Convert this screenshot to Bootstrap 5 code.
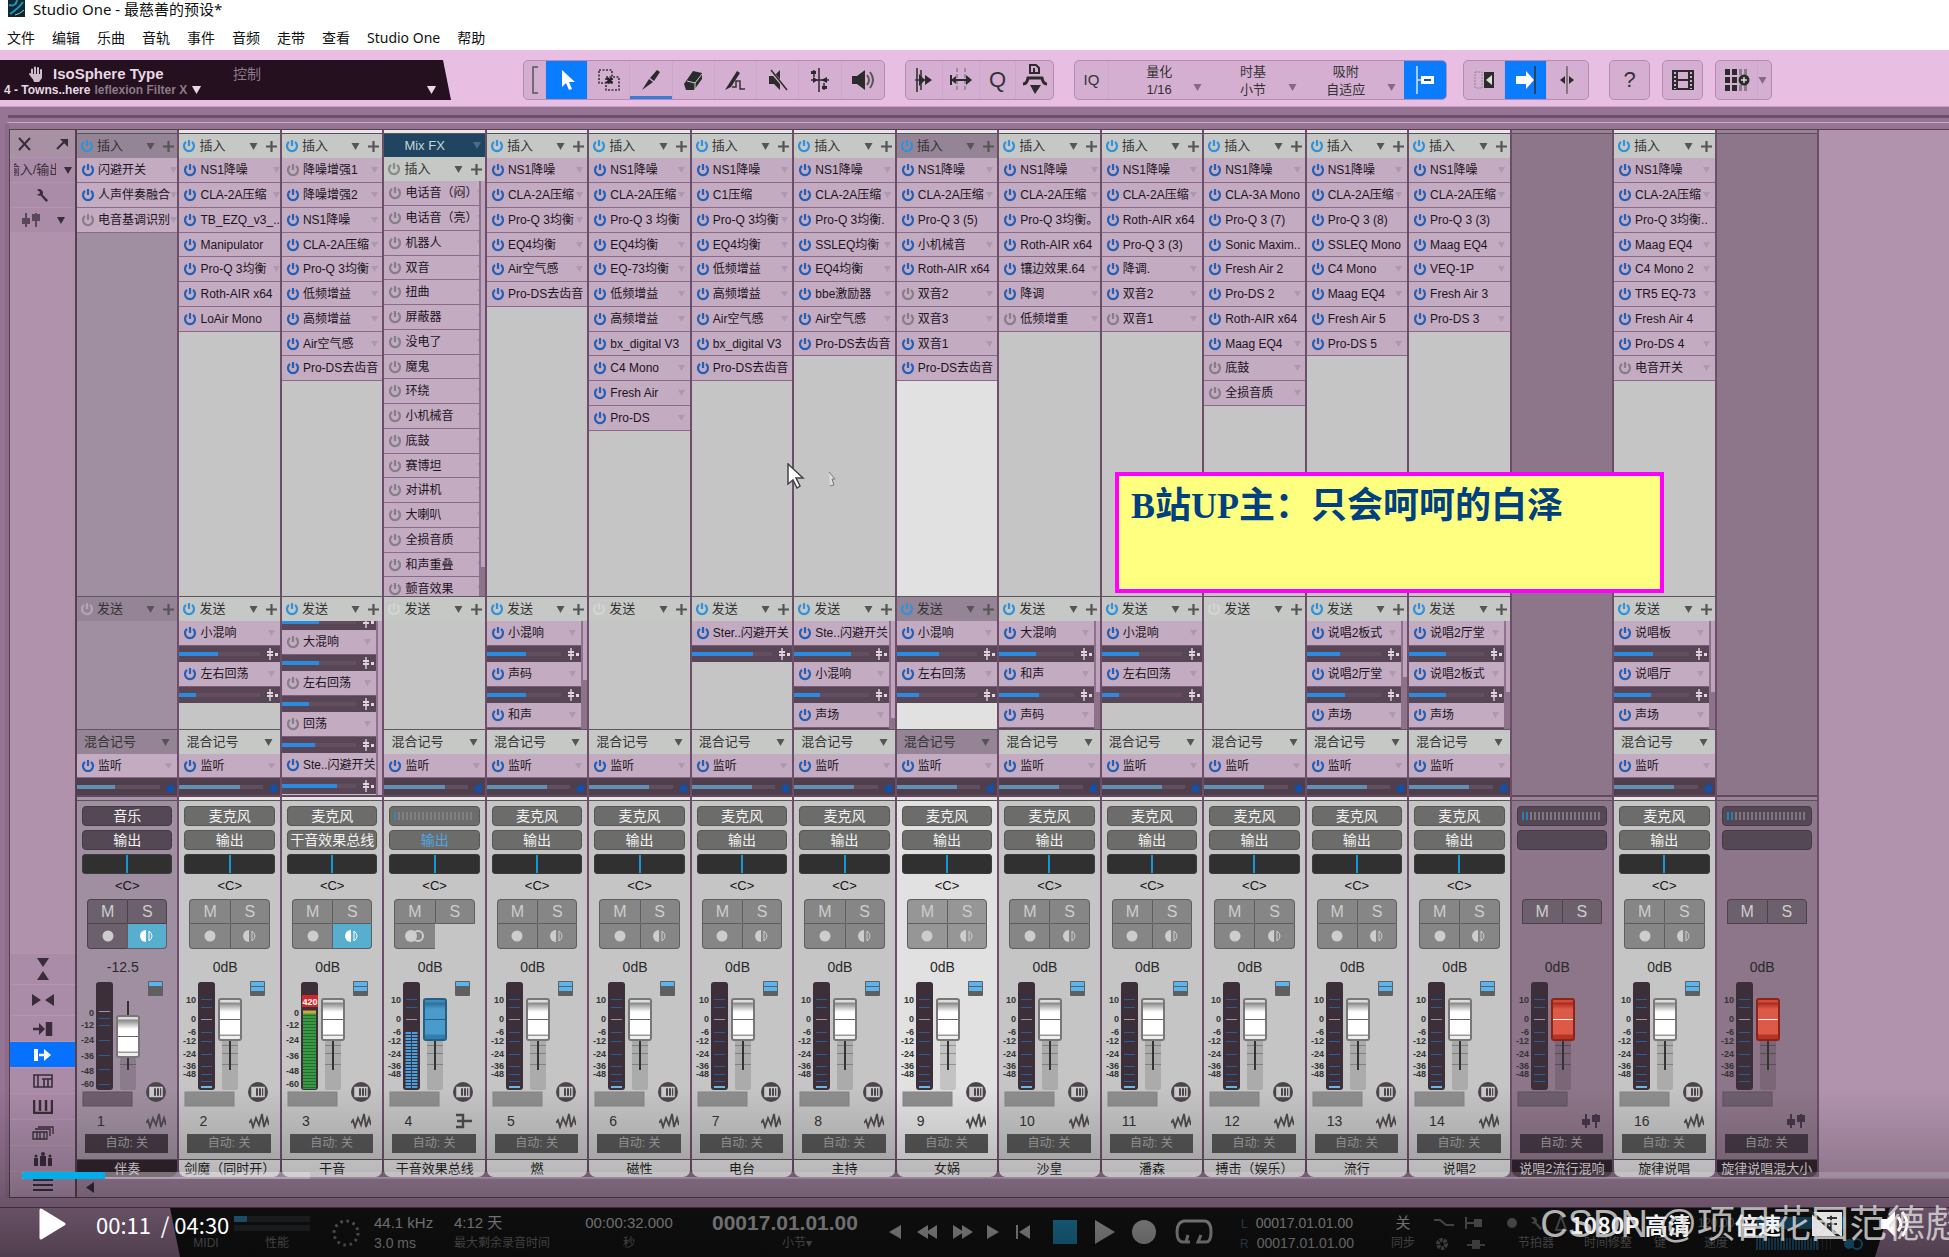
<!DOCTYPE html>
<html lang="zh-CN">
<head>
<meta charset="utf-8">
<meta name="viewport" content="width=device-width, initial-scale=1">
<title>Studio One - 最慈善的预设*</title>
<link rel="stylesheet" href="https://cdn.jsdelivr.net/npm/bootstrap@5.3.0/dist/css/bootstrap.min.css">
<style>
:root{--line:#6c4e6b;--dark:#54404f;--slot:#c3abc2;--face:#c5c5c5;--cjk:"Noto Sans CJK SC"}
body{font-family:"Liberation Sans",var(--cjk),sans-serif;font-size:12px;line-height:16px;color:#161216;background:#967494;height:100vh;overflow:hidden}
button,select,input{font-family:inherit;color:inherit;border:0;padding:0;margin:0;background:none}
a{color:inherit;text-decoration:none}
svg{display:block;flex:none}
/* window head */
.winbar{background:#fff;color:#111;height:20px;font:15px/18px "Noto Sans",var(--cjk),sans-serif;padding-left:8px;gap:8px}
.winmenu{background:#fff;color:#111;height:30px;font:14px/22px "Noto Sans",var(--cjk),sans-serif;padding:7px 0 0 7px;gap:17px}
.toolbar{background:#e8bfe3;height:57px;padding-top:10px;border-bottom:1px solid #c79fc4}
.plug{width:451px;height:40px;background:#24101f;clip-path:polygon(0 0,443px 0,451px 100%,0 100%);color:#e8d8e6;margin-right:72px;padding:5px 14px 0 4px}
.plug .nm{font:bold 15px/17px "Liberation Sans",sans-serif;width:180px;margin-left:9px}
.plug .dim{color:#8d7a8a}
.plug .ctl{font-size:14px;color:#8d7a8a}
.tgroup{height:40px;background:#d5afd1;border:1px solid #b48bb1;border-radius:5px;overflow:hidden;color:#333;flex:none}
.tgroup button{width:42px;display:flex;align-items:center;justify-content:center;border-right:1px solid #cfa6cc}
.tgroup button:last-child{border-right:0}
.tgroup .on{background:#0a7cff;color:#fff}
.tgroup .drawn{box-shadow:inset 0 -4px 0 -1px #3b7ad6}
.tools{width:362px}.tools button:first-child{width:22px}
.edits{width:149px}.quant{width:373px}.scrolls{width:126px}.single{width:41px}.layouts{width:57px}
.glyph{font-size:22px}.quant .iq{width:34px;font-size:15px}
.qfield{text-align:center;font-size:13px;line-height:18px;color:#333}
.qfield label{display:block}
.qfield select{appearance:none;width:100%;text-align:center;text-align-last:center;height:18px;line-height:18px}
.groove{height:3px;background:#69506a;margin:8px 0 -11px 8px;flex:none;position:relative}
/* mixer */
.mixer{margin:15px 0 9px 5px;border-left:4px solid #8d6c8b;border-top:1px solid #d2a6d0;padding-top:6px;min-height:0}
.rail{width:68px;background:#b092ad;border:1px solid var(--dark);border-right:2px solid var(--dark);color:#382d38;flex:none}
.rail .rtop{height:27px;background:#a791a3;padding:0 6px}
.rail .ritem{height:25px;background:#aa8ba8;border-top:1px solid #b393b0;display:flex;align-items:center;justify-content:center;width:100%}
.rail .rlow{height:26px}.rail .rtall{height:31px}
.rail .on{background:#0672ff;color:#fff}
.rail .iolab{width:42px;overflow:hidden;display:flex;justify-content:center;white-space:nowrap;font-size:13px}
.strips{border-top:1px solid var(--dark);min-width:0;min-height:0}
.narrow{min-width:0}.short{min-height:0}
.filler{width:130px;background:#b293ae;flex:none}
.strip{flex:1 1 0;min-width:0;border-right:2px solid var(--line);background:var(--face);overflow:hidden}
.cap4{height:4px;background:#e8e4e8;border-bottom:1px solid #555;flex:none}
.shead{height:24px;flex:none;padding:0 3px 0 3px;font-size:13px;color:#333;background:#c6c8c6}
.shead .ttl{flex:1 1 0;padding-left:3px}
.inserts{flex:1 1 0;min-height:0;overflow:hidden}
.slots{display:grid;grid-auto-rows:25px 25px 25px 24px}
.slot{background:var(--slot);border-bottom:1px solid #8b6a89;padding:0 5px 0 4px;display:flex;align-items:center;white-space:nowrap;color:#1c141c}
.slot .tx{flex:1 1 0;min-width:0;padding-left:3px}
.sends{height:133px;flex:none;border-top:1px solid #5f5660;overflow:hidden}
.sends.tall{height:199px}
.send{height:25px;border-bottom:1px solid #7b5c79}
.peek{height:9px;overflow:hidden;display:flex;flex-direction:column;justify-content:end}
.sbar{height:16px;flex:none;background:#584555;padding-right:2px;color:#ddd}
.sbar .trk{flex:1 1 0;height:4px;background:#624e5f;margin-right:6px}
.sbar .val{height:4px;background:#2b8be0}
.cue{height:66px;flex:none;border-top:1px solid #5f5660}
.cue .shead{padding-left:4px}
.cue .slot{height:24px}
.cue .sbar{height:17px;background:#4f3e4c;color:#0b4fae}
.cue .val{background:#6290b4}
.scr{width:6px;background:#8d7389;flex:none}
.scr div{background:#bfa2bd;width:4px;margin-left:2px}
.desk{border-top:2px solid #614a60;flex:none}
.plate{height:20px;border-radius:4px;background:#6c6c6a;border:1px solid #565656;color:#f2f2f2;font-size:14px;line-height:18px;text-align:center;display:block;width:100%;white-space:nowrap;overflow:hidden}
.stack{gap:4px;padding:5px 5px 0;display:flex;flex-direction:column;height:73px}
.pan{height:20px;border-radius:3px;background:#303030;border:1px solid #3c3c3c;display:flex;justify-content:center}
.pan i{width:2px;background:#1796d0}
.panv{height:24px;line-height:24px;text-align:center;font-size:13px}
.msgrid{margin:1px 10px 0;height:58px;display:grid;grid-template-columns:1fr 1fr;grid-auto-rows:25px;color:#cdcdcd;align-content:start}
.msgrid button{background:#868686;border:1px solid #5e5e5e;font-size:16px;line-height:22px;display:flex;align-items:center;justify-content:center}
.msgrid button:nth-child(odd){border-right:0}
.msgrid button:nth-child(n+3){border-top:0}
.msgrid button:first-child{border-top-left-radius:4px}.msgrid button:nth-child(2){border-top-right-radius:4px}
.msgrid button:nth-child(3){border-bottom-left-radius:4px}.msgrid button:nth-child(4){border-bottom-right-radius:4px}
.msgrid .lit{background:#58aecf;color:#fff}
.dbv{height:22px;line-height:20px;text-align:center;font-size:14px;padding-right:9px;color:#2a2a2a}
.fad{height:130px;position:relative}
.fad svg text{font:bold 9px "Liberation Sans",sans-serif}
.fslot{position:absolute;left:39px;top:3px;width:24px;height:108px}
.fslot input{appearance:none;-webkit-appearance:none;position:absolute;left:0;top:108px;width:108px;height:24px;transform:rotate(-90deg);transform-origin:0 0;background:transparent}
.fslot input::-webkit-slider-runnable-track{height:24px;background:transparent}
.fslot input::-webkit-slider-thumb{-webkit-appearance:none;width:43px;height:24px;border-radius:3px;border:2px solid #777;background:linear-gradient(90deg,#eee 0 3px,#999 3px 4px,#fff 5px 19px,#666 19px 20px,#fff 20px 27px,#888 36px,#ddd 37px)}
.bus input::-webkit-slider-thumb{border-color:#245f86;background:linear-gradient(90deg,#2f7fb0 0 4px,#4a9bcb 5px 19px,#1f5f88 19px 20px,#4a9bcb 20px 30px,#2a6d99 36px,#3e8cba 37px)}
.vca input::-webkit-slider-thumb{border-color:#8e2418;background:linear-gradient(90deg,#b93424 0 4px,#dd5a48 5px 19px,#fff 19px 20px,#dd5a48 20px 30px,#a92a1b 36px,#d24a38 37px)}
.numrow{height:24px;padding:0 11px 0 20px;font-size:14px;color:#333}
.auto{margin:1px 9px 6px 8px;height:19px;background:#565656;color:#a3a3a3;font-size:12px;line-height:19px;display:block;width:calc(100% - 17px)}
.nameplate{height:18px;line-height:17px;border-top:1px solid #555;background:#e2e0e2;border-radius:0 0 7px 7px;text-align:center;font-size:13px;white-space:nowrap;color:#222}
.nmwrap{background:var(--line)}
.music{background:#a08fa0}.music .cap4{background:#a894a8}
.music .shead,.sel .shead{background:#958495}
.sel{background:#e1e1e1}
.vca{background:#8d7689}.vca .cap4{background:#9a8297}
.music .plate,.vca .plate{background:#544854;border-color:#453a45}
.music .msgrid button:not(.lit),.vca .msgrid button{background:#6c606c;border-color:#4b404b}
.music .nameplate,.vca .nameplate{background:#33252f;color:#e4dfe4}
.music .auto,.vca .auto{background:#463a46}
.sel .msgrid button{background:#969696}
.busl .plate.out{color:#4fa6e4}
.mixhead{background:#1f4560;color:#c8d4dc;height:23px;flex:none;font-size:13px;padding:0 4px 0 20px}
.hscroll{height:21px;border-top:1px solid #a88ca6;border-bottom:1px solid var(--dark);background:#9b7e98;padding:0 9px}
/* transport */
.transport{height:50px;flex:none;background:#93728f;border-top:1px solid #50404f}
.tbar{margin-left:170px;margin-right:59px;background:#141414;color:#a8a8a8;clip-path:polygon(0 0,100% 0,calc(100% - 15px) 100%,10px 100%);height:49px;padding:6px 0 0 10px;overflow:hidden}
.tbar>*{width:72px;flex:none}
.tbar .c{height:40px;text-align:center;font-size:12px;line-height:18px;white-space:nowrap}
.tbar .c span{display:block;height:20px}
.tbar .mid{font-size:15px}.tbar .two{font-size:14px}.tbar .pos{font-size:21px;font-weight:bold}
.tbar .sm{color:#6d6d6d;font-size:12px}
.tbar i{color:#355a75;font-style:normal;font-size:12px;margin-right:8px}
.tbar button{display:flex;align-items:center;justify-content:center;height:36px}
.tbar>.t-midi{width:52px}.tbar>.t-perf{width:90px}.tbar>.t-ring{width:48px}.tbar>.t-rate{width:80px}.tbar>.t-left{width:118px}.tbar>.t-sec{width:122px}.tbar>.t-bars{width:190px}
.tbar>.w1{width:30px}.tbar>.w2{width:34px}.tbar>.w3{width:22px}.tbar>.w4{width:38px}.tbar>.w5{width:46px}.tbar>.w6{width:44px}.tbar>.w7{width:56px}
.tbar>.t-loc{width:134px}.tbar>.t-sync{width:62px}.tbar>.t-opt{width:66px;color:#666}.tbar>.t-met{color:#666}.tbar>.t-key{width:32px}.tbar>.t-tempo{width:80px}.tbar>.t-out{width:112px}
/* things that lie over the mixer */
.note{position:absolute;left:1115px;top:472px;width:549px;height:121px;border:4px solid #f0f;background:#ffff80;color:#004080;font:bold 36px/54px "Liberation Serif",var(--cjk),serif;padding:3px 0 0 12px;white-space:nowrap;overflow:hidden}
.ptr{position:absolute;left:787px;top:463px}
.ghost{left:828px;top:472px}
.shade{position:absolute;left:0;right:0;bottom:0;height:170px;background:linear-gradient(rgba(0,0,0,0),rgba(0,0,0,.2) 55%,rgba(0,0,0,.46));pointer-events:none}
.vtrack{position:absolute;left:22px;right:0;bottom:78px;height:7px;background:rgba(255,255,255,.16)}
.vtrack .buf{width:288px;background:rgba(255,255,255,.25)}
.vtrack .play{width:83px;background:#00aeec;border-radius:2px 0 0 2px}
.vctl{position:absolute;left:0;right:0;bottom:0;height:66px;color:#fff;padding-left:39px}
.vctl .tm{font:22px/30px var(--cjk),sans-serif;white-space:nowrap;margin-left:30px}
.vctl .hd{font:bold 23px/30px var(--cjk),sans-serif;color:#f2f2f2;width:165px;text-align:left;white-space:nowrap}
.vctl .sp,.vctl .dm{width:72px}.vctl .vol{width:70px}
.wmark{position:absolute;right:-14px;bottom:8px;font:38px/50px "Liberation Sans",var(--cjk),sans-serif;color:rgba(225,225,225,.8);white-space:nowrap}
</style>
<script src="https://cdn.jsdelivr.net/npm/bootstrap@5.3.0/dist/js/bootstrap.bundle.min.js"></script>
</head>
<body class="d-flex flex-column position-relative">
<svg width="0" height="0" class="position-absolute">
 <symbol id="pw" viewBox="0 0 14 14"><path d="M4 2.8A5 5.2 0 1 0 10 2.8M7 1v6" fill="none" stroke="currentColor" stroke-width="2.2"/></symbol>
 <symbol id="dn" viewBox="0 0 8 7"><path d="M0 0h8L4 7z" fill="currentColor"/></symbol>
 <symbol id="pl" viewBox="0 0 10 10"><path d="M5 0v10M0 5h10" stroke="currentColor" stroke-width="2"/></symbol>
 <symbol id="sf" viewBox="0 0 12 12"><path d="M4 0v12" stroke="currentColor" stroke-width="1.4"/><path d="M1 3h6v2H1zM1 6h6v2H1zM9 5h3v3H9z" fill="currentColor"/></symbol>
 <symbol id="lk" viewBox="0 0 8 12"><path d="M1 5h6v6H1z" fill="currentColor"/><path d="M6 5V2" stroke="currentColor"/></symbol>
 <symbol id="wv" viewBox="0 0 20 16"><path d="M0 10l2-3 2 7 3-9 3 7 3-11 2 13 3-9 2 7" fill="none" stroke="currentColor" stroke-width="1.800"/></symbol>
 <symbol id="bs" viewBox="0 0 20 16"><path d="M2 2h7v12H2M3 8h15" fill="none" stroke="currentColor" stroke-width="2.4"/></symbol>
 <symbol id="fd" viewBox="0 0 20 16"><path d="M5 1v14M15 1v14" stroke="currentColor" stroke-width="2"/><path d="M1 6h8v6H1zM11 2h8v7h-8z" fill="currentColor"/></symbol>
 <symbol id="wr" viewBox="0 0 14 14"><path d="M1 1a4 4 0 0 1 6 5l6 6-2 2-6-7a4 4 0 0 1-4-1l3-1V3z" fill="currentColor"/></symbol>
</svg>

<header>
 <div class="winbar d-flex">
  <svg width="17" height="17" viewBox="0 0 17 17"><path d="M0 0h17v17H0z" fill="#0d2733"/><path d="M1 5q7 2 8-5M2 14q9-6 13-12" stroke="#2292b5" stroke-width="2" fill="none"/><path d="M7 15q5-1 9-5" stroke="#9cc" fill="none"/></svg>
  <span>Studio One - 最慈善的预设*</span>
 </div>
 <nav class="winmenu d-flex"><a href="#">文件</a><a href="#">编辑</a><a href="#">乐曲</a><a href="#">音轨</a><a href="#">事件</a><a href="#">音频</a><a href="#">走带</a><a href="#">查看</a><a href="#">Studio One</a><a href="#">帮助</a></nav>
 <div class="toolbar d-flex">
  <div class="plug">
   <div class="d-flex align-items-center">
    <svg class="ms-4" width="16" height="16" viewBox="0 0 16 16"><path d="M4 9V3.500M7 8V1.500M10 8V2M13 9V4M2 8l3 4" stroke="#cdbccb" stroke-width="2" stroke-linecap="round"/><path d="M3 8h11v4l-3 4H6z" fill="#cdbccb"/></svg>
    <span class="nm">IsoSphere Type</span><span class="ctl">控制</span>
   </div>
   <div class="d-flex align-items-center"><b>4 - Towns..here</b><b class="dim ms-1 me-1">leflexion Filter X</b><svg width="11" height="8"><use href="#dn"/></svg><svg class="ms-auto" width="11" height="8"><use href="#dn"/></svg></div>
  </div>
  <div class="tgroup tools d-flex me-3">
   <button aria-label="范围"><svg width="6" height="28"><path d="M6 1H1v26h5" fill="none" stroke="#555" stroke-width="1.5"/></svg></button>
   <button class="on" aria-label="箭头"><svg width="18" height="24" viewBox="0 0 18 24"><path d="M4 2v17l4-4 3 7 3-1-3-7h6z" fill="#fff"/></svg></button>
   <button class="flex-fill" aria-label="选区"><svg width="22" height="22"><path d="M1 1h13v13H1zM8 8h13v13H8z" fill="none" stroke="#333" stroke-width="1.6" stroke-dasharray="2 1.500"/><path d="m9 9 5 5m0-5-5 5" stroke="#222" stroke-width="2.500"/></svg></button>
   <button class="drawn flex-fill" aria-label="铅笔"><svg width="20" height="22"><path d="M1 21 8 10l4 3z M9 9l7-8 3 2-6 9z" fill="#2b2b2b"/></svg></button>
   <button class="flex-fill" aria-label="橡皮"><svg width="22" height="22"><path d="M2 15 11 2l9 2v6L12 21H4z" fill="#2b2b2b"/><path d="m5 12 8 2v7M13 14l7-9" stroke="#ccc" fill="none"/></svg></button>
   <button class="flex-fill" aria-label="画笔"><svg width="22" height="22"><path d="M1 21 13 2l3 2L7 18z" fill="#2b2b2b"/><path d="M8 18h4v-6h4v8h5" fill="none" stroke="#333" stroke-width="1.500"/></svg></button>
   <button class="flex-fill" aria-label="静音"><svg width="22" height="22"><path d="M2 7h5l6-6v20l-6-6H2z" fill="#2b2b2b"/><path d="m3 1 17 20" stroke="#d5afd1" stroke-width="3"/><path d="m4 1 16 20" stroke="#2b2b2b" stroke-width="1.500"/></svg></button>
   <button class="flex-fill" aria-label="弯曲"><svg width="22" height="24"><path d="M10 0v24M2 12h18M5 2v7M15 15v7" stroke="#2b2b2b" stroke-width="1.500"/><path d="m4 9 5 3-5 3zM18 9l-6 3 6 3zM2 3h5v3H2zM13 18h5v3h-5z" fill="#2b2b2b"/></svg></button>
   <button class="flex-fill" aria-label="监听"><svg width="24" height="22"><path d="M1 7h5l8-6v20l-8-6H1z" fill="#2b2b2b"/><path d="M16 6q4 5 0 10M19 3q6 8 0 16" fill="none" stroke="#555" stroke-width="2"/></svg></button>
  </div>
  <div class="tgroup edits d-flex ms-1 me-3">
   <button class="flex-fill" aria-label="跟随"><svg width="18" height="24"><path d="M2 0v24M6 2v20M0 12h14" stroke="#333" stroke-width="1.600"/><path d="m4 6 6 6-6 6zM10 7l7 5-7 5z" fill="#2b2b2b"/></svg></button>
   <button class="flex-fill" aria-label="拉伸"><svg width="22" height="24"><path d="M7 0v24M15 0v24" stroke="#666" stroke-dasharray="4 2"/><path d="M2 12h18M1 7v10" stroke="#2b2b2b" stroke-width="2"/><path d="m16 7 6 5-6 5zM6 8l-5 4 5 4z" fill="#2b2b2b"/></svg></button>
   <button class="flex-fill glyph">Q</button>
   <button class="flex-fill" aria-label="宏"><svg width="26" height="32"><path d="M8 9V1h6l3 3v5zM12 4v4" fill="none" stroke="#2b2b2b" stroke-width="2"/><path d="M1 20q4 0 5-6h14q1 6 5 6" fill="none" stroke="#2b2b2b" stroke-width="3"/><path d="M8 21h11l-6 9z" fill="#2b2b2b"/></svg></button>
  </div>
  <div class="tgroup quant d-flex ms-1 me-3">
   <button class="iq">IQ</button>
   <div class="qfield d-flex align-items-end flex-fill"><div class="flex-fill ps-3"><label for="q1">量化</label><select id="q1"><option>1/16</option></select></div><svg class="mb-2 me-2" width="9" height="7" color="#86688a"><use href="#dn"/></svg></div>
   <div class="qfield d-flex align-items-end flex-fill"><div class="flex-fill ps-2"><label for="q2">时基</label><select id="q2"><option>小节</option></select></div><svg class="mb-2 me-2" width="9" height="7" color="#86688a"><use href="#dn"/></svg></div>
   <div class="qfield d-flex align-items-end flex-fill"><div class="flex-fill"><label for="q3">吸附</label><select id="q3"><option>自适应</option></select></div><svg class="mb-2 me-2" width="9" height="7" color="#86688a"><use href="#dn"/></svg></div>
   <button class="on" aria-label="吸附开关"><svg width="22" height="28"><path d="M3 0v28M3 14h5" stroke="#cde" stroke-width="1.600"/><path d="M7 10h13v8H7z" fill="#fff"/><path d="M10 14h7" stroke="#258" stroke-width="2"/></svg></button>
  </div>
  <div class="tgroup scrolls d-flex me-3">
   <button aria-label="自动滚动"><svg width="20" height="18"><path d="M1 1h7v16H1z" fill="none" stroke="#888" stroke-dasharray="2 1"/><path d="M10 1h10v16H10z" fill="#2b2b2b"/><path d="m18 4-6 5 6 5z" fill="#ddd"/></svg></button>
   <button class="on" aria-label="光标跟随"><svg width="22" height="28"><path d="M1 10h10V5l8 9-8 9v-5H1z" fill="#fff"/><path d="M20 0v28" stroke="#333" stroke-width="1.500"/></svg></button>
   <button aria-label="分割"><svg width="16" height="28"><path d="M8 0v28" stroke="#666" stroke-width="1.500"/><path d="m6 10-5 4 5 4zM10 10l5 4-5 4z" fill="#2b2b2b"/></svg></button>
  </div>
  <div class="tgroup single d-flex ms-1 me-2"><button class="glyph">?</button></div>
  <div class="tgroup single d-flex ms-1 me-2"><button aria-label="视频"><svg width="24" height="22"><path d="M1 1h22v20H1z" fill="#2b2b2b"/><path d="M7 3h10v7H7zM7 12h10v7H7z" fill="#d5afd1"/><path d="M4 3v17M20 3v17" stroke="#d5afd1" stroke-width="2" stroke-dasharray="2 2"/></svg></button></div>
  <div class="tgroup layouts d-flex ms-1"><button aria-label="布局"><svg width="26" height="22"><path d="M1 0h5v6H1zM8 0h5v6H8zM1 8h5v6H1zM8 8h5v6H8zM1 16h5v6H1zM8 16h5v6H8z" fill="#2b2b2b"/><path d="M15 0h3v6h-3zM20 0h3v6h-3zM15 16h3v6h-3zM20 16h3v6h-3z" fill="#8d7a8c"/><circle cx="20" cy="11" r="5.500" fill="#2b2b2b"/><path d="M20 8v6M17 11h6" stroke="#ddd" stroke-width="1.500"/></svg></button><svg class="align-self-center" width="9" height="7" color="#86688a"><use href="#dn"/></svg></div>
 </div>
</header>

<div class="groove"></div>
<main class="mixer d-flex flex-fill">
 <aside class="rail d-flex flex-column">
  <div class="rtop d-flex align-items-center justify-content-between">
   <button aria-label="关闭"><svg width="16" height="14"><path d="m3 1 11 12M14 1 3 13" stroke="currentColor" stroke-width="2"/></svg></button>
   <button aria-label="弹出"><svg width="14" height="14"><path d="m2 12 8-8" stroke="currentColor" stroke-width="2"/><path d="M5 2h8v8z" fill="currentColor"/></svg></button>
  </div>
  <button class="ritem"><span class="iolab">输入/输出</span><svg class="ms-2" width="8" height="7"><use href="#dn"/></svg></button>
  <button class="ritem" aria-label="设置"><svg width="13" height="13"><use href="#wr"/></svg></button>
  <button class="ritem" aria-label="推子"><svg width="20" height="18" opacity=".7"><use href="#fd"/></svg><svg class="ms-3" width="8" height="7"><use href="#dn"/></svg></button>
  <div class="flex-fill"></div>
  <button class="ritem rtall" aria-label="展开"><svg width="12" height="22"><path d="M0 0h12L6 9zM0 22h12l-6-9z" fill="currentColor"/></svg></button>
  <button class="ritem rtall" aria-label="收窄"><svg width="22" height="12"><path d="M0 0v12l9-6zM22 0v12l-9-6z" fill="currentColor"/></svg></button>
  <button class="ritem rlow" aria-label="输入"><svg width="20" height="14"><path d="M0 7h8M14 1h4v12h-4z" stroke="currentColor" stroke-width="2.500" fill="currentColor"/><path d="m6 1 6 6-6 6z" fill="currentColor"/></svg></button>
  <button class="ritem rlow on" aria-label="输出"><svg width="20" height="14"><path d="M1 1h4v12H1z" fill="currentColor"/><path d="M6 7h8" stroke="currentColor" stroke-width="2.500"/><path d="m11 1 7 6-7 6z" fill="currentColor"/></svg></button>
  <button class="ritem rlow" aria-label="外部"><svg width="20" height="14"><path d="M1 1h18v12H1zM5 1v12M9 5h10M11 5v8M15 5v8" fill="none" stroke="currentColor" stroke-width="1.600"/></svg></button>
  <button class="ritem rlow" aria-label="乐器"><svg width="20" height="14"><path d="M1 0v13h18V0M7 0v11M13 0v11" fill="none" stroke="currentColor" stroke-width="2.500"/></svg></button>
  <button class="ritem rlow" aria-label="层"><svg width="22" height="14"><path d="M1 6h14v7H1zM3 3h15v7M6 1h15v7M5 6v7M8 6v7M12 6v7" fill="none" stroke="currentColor" stroke-width="1.300"/></svg></button>
  <button class="ritem rlow" aria-label="群组"><svg width="18" height="14"><path d="M0 6h4v8H0zM6 4h6v10H6zM14 6h4v8h-4z" fill="currentColor"/><circle cx="9" cy="2" r="2" fill="currentColor"/><circle cx="2" cy="4" r="1.500" fill="currentColor"/><circle cx="16" cy="4" r="1.500" fill="currentColor"/></svg></button>
  <button class="ritem rlow" aria-label="列表"><svg width="20" height="14"><path d="M0 2h20M0 7h20M0 12h20" stroke="currentColor" stroke-width="2"/></svg></button>
 </aside>
 <div class="flex-fill d-flex flex-column narrow">
  <div class="strips d-flex flex-fill"><div id="strips" class="d-flex flex-fill narrow"></div><div class="filler"></div></div>
  <div class="hscroll d-flex align-items-center flex-shrink-0"><svg width="8" height="11"><path d="M8 0v11L0 5.500z" fill="#33263a"/></svg></div>
 </div>
</main>

<footer class="transport">
 <div class="tbar d-flex">
  <div class="c t-midi"><span></span><span class="sm">MIDI</span></div>
  <div class="c t-perf"><span><svg width="78" height="18"><path d="M2 2h76v6H2zM2 11h76v6H2z" fill="#25282b"/><path d="M2 2h13v6H2z" fill="#2b7095"/></svg></span><span class="sm">性能</span></div>
  <div class="c t-ring"><svg class="mx-auto mt-1" width="30" height="30"><circle cx="15" cy="15" r="12" fill="none" stroke="#777" stroke-width="3" stroke-dasharray="2.500 3.800"/></svg></div>
  <div class="c two text-start ps-1 t-rate"><span class="mid">44.1 kHz</span><span>3.0 ms</span></div>
  <div class="c text-start ps-1 t-left"><span class="mid">4:12 天</span><span class="sm">最大剩余录音时间</span></div>
  <div class="c t-sec"><span class="mid">00:00:32.000</span><span class="sm">秒</span></div>
  <div class="c t-bars"><span class="pos">00017.01.01.00</span><span class="sm ps-4">小节▾</span></div>
  <button class="w1" aria-label="后退"><svg width="12" height="14"><path d="M12 0v14L0 7z" fill="currentColor"/></svg></button>
  <button class="w2" aria-label="快退"><svg width="20" height="14"><path d="M11 0v14L0 7zM20 0v14L9 7z" fill="currentColor"/></svg></button>
  <button class="w4" aria-label="快进"><svg width="20" height="14"><path d="M0 0v14l11-7zM9 0v14l11-7z" fill="currentColor"/></svg></button>
  <button class="w3" aria-label="前进"><svg width="12" height="14"><path d="M0 0v14l12-7z" fill="currentColor"/></svg></button>
  <button class="w4" aria-label="回到开头"><svg width="14" height="14"><path d="M14 0v14L3 7zM0 0h2v14H0z" fill="currentColor"/></svg></button>
  <button class="w5" aria-label="停止"><svg width="24" height="24"><path d="M0 0h24v24H0z" fill="#1d7fa6"/></svg></button>
  <button class="w2" aria-label="播放"><svg width="20" height="24"><path d="M0 0v24l20-12z" fill="currentColor"/></svg></button>
  <button class="w6" aria-label="录音"><svg width="24" height="24"><circle cx="12" cy="12" r="12" fill="currentColor"/></svg></button>
  <button class="w7" aria-label="循环"><svg width="38" height="26"><path d="M15 23H8q-6 0-6-10T9 2h20q7 0 7 11t-6 10h-7l3-7M13 16l-2 7" fill="none" stroke="currentColor" stroke-width="3"/></svg></button>
  <div class="c two ms-2 t-loc"><span><i>L</i>00017.01.01.00</span><span><i>R</i>00017.01.01.00</span></div>
  <div class="c ms-2 t-sync"><span class="mid">关</span><span class="sm">同步</span></div>
  <div class="c text-start t-opt"><svg width="60" height="38"><path d="M0 6h6l6 5h8M32 3v12M32 9h10" stroke="currentColor" stroke-width="2" fill="none"/><path d="M40 5h8v8h-8zM38 26h8v9h-8zM33 30h18v2H33z" fill="currentColor"/><circle cx="8" cy="30" r="4" fill="none" stroke="currentColor" stroke-width="4" stroke-dasharray="3 1"/></svg></div>
  <div class="c t-met"><span><svg width="72" height="18"><circle cx="12" cy="9" r="5" fill="currentColor"/><path d="m56 16 5-14 5 14z" fill="none" stroke="currentColor" stroke-width="2"/><use href="#wr" x="30" y="3" width="13" height="13"/></svg></span><span class="sm">节拍器</span></div>
  <div class="c"><span></span><span class="sm">时间修整</span></div>
  <div class="c t-key"><span></span><span class="sm">键</span></div>
  <div class="c t-tempo"><span class="sm">120.00</span><span class="sm">速度</span></div>
  <div class="c t-out"><svg width="112" height="36"><path d="M0 3h90v12H0z" fill="#1d5574"/><path d="M0 30h62" stroke="#1d5574" stroke-width="12" stroke-dasharray="2 1"/><path d="M62 30h16" stroke="#333" stroke-width="12" stroke-dasharray="1 3"/><circle cx="93" cy="30" r="5" fill="#1d6f97"/><circle cx="101" cy="30" r="5" fill="none" stroke="#1d6f97" stroke-width="2"/></svg></div>
 </div>
</footer>

<svg class="ptr" width="18" height="26"><path d="M1 1v20l5-4 4 8 3-2-4-8h7z" fill="#fff" stroke="#444" stroke-width="1.500"/></svg>
<svg class="ptr ghost" width="10" height="16"><path d="m1 0 6 7H4l2 6-4 1" fill="#ddd" stroke="#777"/></svg>
<div class="note">B站UP主：只会呵呵的白泽</div>
<div class="shade"></div>
<div class="vtrack"><div class="buf h-100"></div><div class="play position-absolute top-0 start-0 h-100"></div></div>
<div class="vctl d-flex align-items-center">
 <button aria-label="播放视频"><svg width="27" height="32"><path d="M2 2v28l23-14z" fill="#fff" stroke="#fff" stroke-width="3" stroke-linejoin="round"/></svg></button>
 <span class="tm">00:11&nbsp; / 04:30</span>
 <button class="hd ms-auto">1080P 高清</button>
 <button class="hd sp">倍速</button>
 <button class="dm" aria-label="弹幕"><svg width="40" height="32"><path d="M5 4h30v24H5z" fill="#e4e4e4"/><path d="M20 10h10M20 16h10M24 7v15" stroke="#333" stroke-width="2"/><path d="m2 2 34 30" stroke="#222" stroke-width="3"/></svg></button>
 <button class="vol" aria-label="音量"><svg width="34" height="32"><path d="M2 11h6l8-8v26l-8-8H2z" fill="#fff"/><path d="M19 9q6 7 0 14M23 4q10 12 0 24" fill="none" stroke="#fff" stroke-width="3"/></svg></button>
</div>
<div class="position-absolute bottom-0 start-0 end-0 top-0 overflow-hidden pe-none"><div class="wmark">CSDN @项目花园范德彪</div></div>

<script>
const N='NS1降噪',C='CLA-2A压缩',P='Pro-Q 3均衡',D='Pro-DS去齿音',R='Roth-AIR x64';
// a leading "-" marks a bypassed slot; sends are [name, level %]
const strips=[
 {t:'music',ins:['闪避开关','人声伴奏融合','-电音基调识别'],sends:[],off:1,src:'音乐',db:'-12.5',name:'伴奏',mon:1,cue:45,half:1},
 {ins:[N,C,'TB_EZQ_v3_..','Manipulator',P,R,'LoAir Mono'],sends:[['小混响',48],['左右回荡',20]],name:'剑魔（同时开）'},
 {ins:['-降噪增强1','降噪增强2',N,C,P,'低频增益','高频增益','Air空气感',D],sends:[['-大混响',50],['-左右回荡',36],['-回荡',44],['Ste..闪避开关',74]],tall:1,out:'干音效果总线',mon:1,clip:1,name:'干音'},
 {t:'busl',mix:1,insoff:1,ins:['-电话音（闷）','-电话音（亮）','-机器人','-双音','-扭曲','-屏蔽器','-没电了','-魔鬼','-环绕','-小机械音','-底鼓','-赛博坦','-对讲机','-大喇叭','-全损音质','-和声重叠','-颤音效果'],sends:[],off:1,name:'干音效果总线',half:1},
 {ins:[N,C,P,'EQ4均衡','Air空气感',D],sends:[['小混响',53],['声码',53],['和声',50]],scr:55,name:'燃'},
 {ins:[N,C,'Pro-Q 3 均衡','EQ4均衡','EQ-73均衡','低频增益','高频增益','bx_digital V3','C4 Mono','Fresh Air','Pro-DS'],sends:[],off:1,name:'磁性',half:1},
 {ins:[N,'C1压缩',P,'EQ4均衡','低频增益','高频增益','Air空气感','bx_digital V3',D],sends:[['Ster..闪避开关',76]],name:'电台'},
 {ins:[N,C,P+'.','SSLEQ均衡','EQ4均衡','bbe激励器','Air空气感',D],sends:[['Ste..闪避开关',76],['小混响',34],['声场',50]],scr:90,name:'主持'},
 {t:'sel',ins:[N,C,'Pro-Q 3 (5)','小机械音',R,'-双音2','-双音3','双音1',D],sends:[['小混响',52],['左右回荡',28]],name:'女娲'},
 {ins:[N,C,P+'。',R,'镶边效果.64','降调','-低频增重'],sends:[['大混响',50],['和声',53],['声码',50]],scr:66,name:'沙皇'},
 {ins:[N,C,R,'Pro-Q 3 (3)','降调.','双音2','-双音1'],sends:[['小混响',46],['左右回荡',22]],name:'潘森'},
 {ins:[N,'CLA-3A Mono','Pro-Q 3 (7)','Sonic Maxim..','Fresh Air 2','Pro-DS 2',R,'Maag EQ4','-底鼓','-全损音质'],sends:[],off:1,name:'搏击（娱乐）',half:1},
 {ins:[N,C,'Pro-Q 3 (8)','SSLEQ Mono','C4 Mono','Maag EQ4','Fresh Air 5','Pro-DS 5'],sends:[['说唱2板式',45],['说唱2厅堂',52],['声场',50]],scr:52,name:'流行'},
 {ins:[N,C,'Pro-Q 3 (3)','Maag EQ4','VEQ-1P','Fresh Air 3','Pro-DS 3'],sends:[['说唱2厅堂',50],['说唱2板式',50],['声场',50]],scr:66,name:'说唱2'},
 {t:'vca',name:'说唱2流行混响'},
 {ins:[N,C,P+'..','Maag EQ4','C4 Mono 2','TR5 EQ-73','Fresh Air 4','Pro-DS 4','-电音开关'],sends:[['说唱板',52],['说唱厅',50],['声场',50]],scr:66,name:'旋律说唱'},
 {t:'vca',name:'旋律说唱混大小'}];
const use=(id,w,h,c,cls='')=>`<svg class="${cls}" width="${w}" height="${h}" color="${c}"><use href="#${id}"/></svg>`;
const pw=c=>`<button aria-label="开关">${use('pw',14,14,c)}</button>`;
const slot=(s,cls='')=>{const off=s[0]=='-';s=s.replace(/^-/,'');
 return `<div class="slot ${cls}">${pw(off?'#857e86':'#235fb4')}<span class="tx">${s}</span>${s.length>9||s==D?'':use('dn',7,6,'#ae98ae')}</div>`};
const head=(t,c)=>`<div class="shead d-flex align-items-center">${c?pw(c):''}<span class="ttl">${t}</span>${use('dn',9,7,'#555','me-1')}${c?use('pl',11,11,'#555','ms-1'):''}</div>`;
const bar=(v,ic)=>`<div class="sbar d-flex align-items-center"><div class="trk"><div class="val" style="width:${v}%"></div></div>${ic}</div>`;
const thumb=v=>`<div class="scr"><div style="height:${v}%"></div></div>`;
const levels=n=>`<svg width="90" height="18">${[...Array(20)].map((_,i)=>`<path d="M${5+i*4} 5v8" stroke="${i<n?'#2390d0':'#8c8590'}" stroke-width="1.500"/>`).join('')}</svg>`;
function fader(s,i){
 const lo=i==0||i==2, dark=s.t=='music'||s.t=='vca', low=i==0;
 const lab=lo?[[0,34],[-12,46],[-24,61],[-36,77],[-48,92],[-60,105]]:[[10,21],[0,40],[-6,53],[-12,62],[-24,75],[-36,87],[-48,95]];
 const tk=lo?[39,46,61,76,90,105]:[20,28,53,62,75,87,95,102];
 let g=lab.map(([t,y])=>`<text x="17" y="${y+3}" text-anchor="end" fill="#333">${t}</text>`).join('');
 g+=`<rect x="19" y="3" width="17" height="108" rx="3" fill="#3c2f3a"/>`;
 if(s.clip)g+=`<rect x="21" y="33" width="13" height="77" fill="#3a9a44"/><path d="M21 33h13" stroke="#d3a83a" stroke-width="3"/><path d="M27.500 36v74" stroke="#256c30" stroke-width="13" stroke-dasharray="1 2"/><rect x="20" y="16" width="16" height="12" fill="#d02828"/><text x="28" y="26" text-anchor="middle" fill="#fff">420</text>`;
 else{g+=tk.map(y=>`<path d="M22 ${y}.5h11" stroke="#2b5f93"/>`).join('')+`<path d="M22 ${lo?32:40}.5h11" stroke="#a594a5"/>`;
  if(s.t=='busl')g+=`<path d="M27.500 53v57" stroke="#4a9fdc" stroke-width="12" stroke-dasharray="2 1"/><path d="M27.500 53v57" stroke="#245"/>`;
  else if(!dark)g+=`<path d="M22 108h11" stroke="#6ab6e6" stroke-width="2"/>`}
 g+=`<rect x="43" y="60" width="16" height="51" rx="2" fill="#000" opacity=".13"/><path d="M43 66.500h16M43 74.500h16M43 85.500h16" stroke="#000" opacity=".25"/><path d="M51 ${low?22:60}V91" stroke="#333" stroke-width="2"/>`;
 g+=`<rect x="6" y="113" width="49" height="14" fill="${dark?'#6f5f6e':'#8e8e8e'}" stroke="${dark?'#5f505e':'#858585'}"/>`;
 if(s.t!='vca')g+=`<circle cx="79" cy="113" r="10" fill="#4c464c"/><path d="M73 108.500h12v9H73z" fill="#4c464c" stroke="#ccc" stroke-width="1.500"/><path d="M73 108h4v10h-4z" fill="#ccc"/><path d="M79.500 108v10M82.500 108v10" stroke="#ccc"/><rect x="71" y="2" width="15" height="15" rx="1" fill="#5f5f5f"/><rect x="72" y="3" width="13" height="4" fill="#5ab4ee"/>${s.half?'':'<rect x="72" y="8" width="13" height="4" fill="#5ab4ee"/>'}`;
 return `<div class="fad ${s.t=='busl'?'bus':''}"><svg width="100" height="130">${g}</svg><div class="fslot"><input type="range" aria-label="音量 ${s.name}" min="0" max="100" value="${low?49:75}"></div></div>`;
}
function strip(s,i){
 const v=s.t=='vca';let h=`<section class="strip d-flex flex-column ${s.t||''}"><div class="cap4"></div>`;
 if(v)h+='<div class="flex-fill"></div>';
 else{
  if(s.mix)h+=`<div class="mixhead d-flex align-items-center justify-content-between"><span>Mix FX</span>${use('dn',8,7,'#4b6c86')}</div>`;
  h+=head('插入',s.insoff?'#8a8a8a':'#3192dc');
  h+=`<div class="inserts d-flex"><div class="slots flex-fill align-content-start narrow">${s.ins.map(x=>slot(x)).join('')}</div>${s.mix?thumb(93):''}</div>`;
  const sf=use('sf',12,12,'#e0d4de');
  h+=`<div class="sends d-flex flex-column ${s.tall?'tall':''}">${head('发送',s.off?(i?'#d4d4d4':'#b3a3b3'):'#3192dc')}<div class="d-flex flex-fill short overflow-hidden"><div class="flex-fill narrow">${s.tall?`<div class="peek">${bar(50,sf)}</div>`:''}${s.sends.map(x=>slot(x[0],'send')+bar(x[1],sf)).join('')}</div>${s.scr?thumb(s.scr):s.tall?thumb(100):''}</div></div>`;
  if(!s.tall)h+=`<div class="cue">${head('混合记号')}${slot('监听')}${bar(s.cue||72,use('lk',9,13,'#0b52b4'))}</div>`;
 }
 h+=`<div class="desk"><div class="cap4"></div><div class="stack">`;
 if(v)h+=`<button class="plate" aria-label="电平">${levels(2)}</button><button class="plate" aria-label="输出"></button></div><div class="panv"></div>`;
 else h+=(s.t=='busl'?`<button class="plate" aria-label="电平">${levels(1)}</button>`:`<button class="plate">${s.src||'麦克风'}</button>`)+`<button class="plate out">${s.out||'输出'}</button><div class="pan"><i></i></div></div><div class="panv">&lt;C&gt;</div>`;
 h+=`<div class="msgrid"><button>M</button><button>S</button>`;
 if(s.t=='busl')h+=`<button aria-label="声道"><svg width="22" height="14"><circle cx="7" cy="7" r="6" fill="currentColor"/><circle cx="14" cy="7" r="5" fill="none" stroke="currentColor" stroke-width="2"/></svg></button>`;
 else if(!v)h+=`<button aria-label="录音"><svg width="12" height="14"><circle cx="6" cy="7" r="5.500" fill="currentColor"/></svg></button><button class="${s.mon?'lit':''}" aria-label="监听"><svg width="14" height="14"><path d="M6 1a6 6 0 0 0 0 12z" fill="currentColor"/><path d="M9 2q6 5 0 10z" fill="none" stroke="currentColor"/></svg></button>`;
 h+=`</div><div class="dbv">${s.db||'0dB'}</div>${fader(s,i)}`;
 h+=`<div class="numrow d-flex align-items-center justify-content-between"><span>${v?'':i+1}</span>${use(v?'fd':s.t=='busl'?'bs':'wv',20,16,v?'#46364a':'#4f4a4f')}</div><button class="auto">自动: 关</button><div class="nmwrap"><div class="nameplate">${s.name}</div></div></div></section>`;
 return h;
}
document.getElementById('strips').innerHTML=strips.map(strip).join('');
</script>
</body>
</html>
